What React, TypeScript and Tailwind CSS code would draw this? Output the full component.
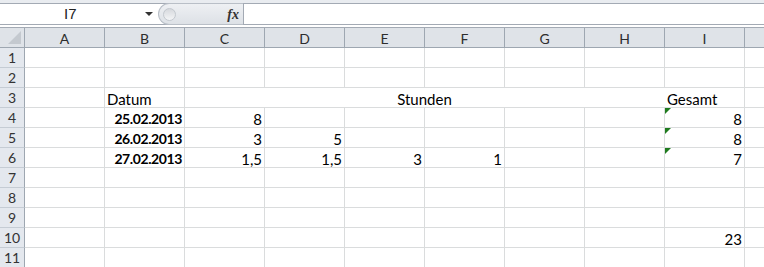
import React from "react";

const cols = ["A", "B", "C", "D", "E", "F", "G", "H", "I"];

type Cell = { v: string; bold?: boolean; left?: boolean; flag?: boolean };

const data: Record<number, Record<string, Cell>> = {
  3: { B: { v: "Datum", left: true }, I: { v: "Gesamt", left: true } },
  4: { B: { v: "25.02.2013", bold: true }, C: { v: "8" }, I: { v: "8", flag: true } },
  5: { B: { v: "26.02.2013", bold: true }, C: { v: "3" }, D: { v: "5" }, I: { v: "8", flag: true } },
  6: {
    B: { v: "27.02.2013", bold: true },
    C: { v: "1,5" },
    D: { v: "1,5" },
    E: { v: "3" },
    F: { v: "1" },
    I: { v: "7", flag: true },
  },
  10: { I: { v: "23" } },
};

const font = { fontFamily: "Lato, 'Open Sans', sans-serif" };

function GridCell({ cell, line = true }: { cell?: Cell; line?: boolean }) {
  return (
    <div
      className={`relative w-[80px] h-full shrink-0 flex items-end px-[2px] leading-[16px] text-black ${
        line ? "border-r border-[#dadcdd]" : "border-r border-transparent"
      } ${cell?.left ? "justify-start" : "justify-end"} ${
        cell?.bold ? "font-bold text-[14px] tracking-[-0.4px]" : "text-[15px]"
      }`}
    >
      {cell?.flag && (
        <div className="absolute left-0 top-0 w-0 h-0 border-t-[6px] border-t-[#1e7b1e] border-r-[6px] border-r-transparent" />
      )}
      {cell?.v}
    </div>
  );
}

function Row({ n }: { n: number }) {
  const r = data[n] || {};
  return (
    <div className="flex h-[20px] border-b border-[#dadcdd]">
      <div className="w-[25px] shrink-0 bg-[#e4e8ee] border-r border-[#9ea7b1] border-b border-b-[#c5ccd4] -mb-px flex items-end justify-center leading-[16px] pb-px text-[14px] text-[#333]">
        {n}
      </div>
      {n === 3 ? (
        <>
          <GridCell cell={r.A} />
          <GridCell cell={r.B} />
          <div className="w-[480px] h-full shrink-0 border-r border-transparent flex items-end justify-center text-[15px] leading-[16px] text-black">
            Stunden
          </div>
          <GridCell cell={r.I} />
        </>
      ) : (
        cols.map((c) => <GridCell key={c} cell={r[c]} />)
      )}
      <div className="flex-1" />
    </div>
  );
}

export default function App() {
  return (
    <div className="w-[764px] h-[267px] overflow-hidden bg-white" style={font}>
      {/* formula bar */}
      <div className="h-[3px] bg-[#e9ecf0]" />
      <div className="flex h-[22px] border-y border-[#a3aab4] bg-white">
        <div className="w-[158px] shrink-0 flex items-center relative">
          <span className="ml-[64px] text-[15px] text-[#222]" style={{ fontFamily: "'Liberation Sans', sans-serif" }}>
            I7
          </span>
          <div className="absolute left-[145px] top-[8px] w-0 h-0 border-x-[4px] border-x-transparent border-t-[4px] border-t-[#333]" />
        </div>
        <div className="w-[85px] shrink-0 rounded-l-full bg-gradient-to-b from-[#eef0f3] to-[#dde1e6] border border-r-0 border-[#b9bfc7] -my-px flex items-center">
          <div className="ml-[4px] w-[13px] h-[13px] rounded-full bg-gradient-to-b from-[#d6d9dd] to-[#f4f5f7] border border-[#c3c8ce]" />
          <span
            className="ml-auto mr-[4px] text-[14px] italic font-bold text-[#333]"
            style={{ fontFamily: "'Liberation Serif', serif" }}
          >
            fx
          </span>
        </div>
        <div className="flex-1 border-l border-[#a3aab4]" />
      </div>
      <div className="h-[2px] bg-white" />
      {/* column headers */}
      <div className="flex h-[21px] border-t border-[#a3aab4] border-b border-b-[#9ea7b1] bg-[#dfe3e8]">
        <div className="w-[25px] shrink-0 border-r border-[#9ea7b1] relative">
          <div className="absolute right-[3px] bottom-[3px] w-0 h-0 border-l-[13px] border-l-transparent border-b-[13px] border-b-[#c4c9cf]" />
        </div>
        {cols.map((c) => (
          <div
            key={c}
            className="w-[80px] shrink-0 border-r border-[#9ea7b1] flex items-center justify-center pt-[2px] text-[14px] text-[#2d2d2d]"
          >
            {c}
          </div>
        ))}
        <div className="flex-1" />
      </div>
      {[1, 2, 3, 4, 5, 6, 7, 8, 9, 10, 11].map((n) => (
        <Row key={n} n={n} />
      ))}
    </div>
  );
}
